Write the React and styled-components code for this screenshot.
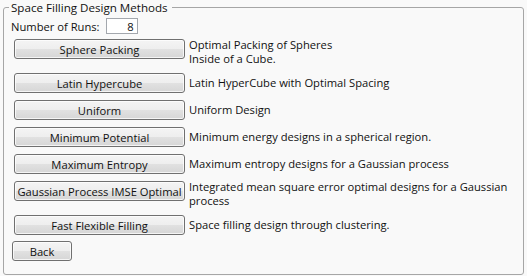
import React from "react"
import styled, { createGlobalStyle } from "styled-components"

const GlobalStyle = createGlobalStyle`
    html, body {
        margin: 0;
        padding: 0;
        background: #f9f9f9;
    }
    body {
        font-family: "Open Sans", "Noto Sans", sans-serif;
        font-size: 11.2px;
        color: #111;
    }
`

const Panel = styled.fieldset`
    margin: 0 3px;
    padding: 3px 5px 13px 5px;
    border: 1px solid #a6a6a6;
    border-radius: 3px;
    min-width: 0;
`

const Legend = styled.legend`
    padding: 0 4px 0 2px;
    line-height: 15px;
    font-size: 11.6px;
`

const RunsRow = styled.div`
    display: flex;
    align-items: center;
    gap: 6px;
    margin-left: 2px;
    height: 16px;
`

const RunsInput = styled.input`
    box-sizing: border-box;
    width: 32px;
    height: 16px;
    border: 1px solid #a3a7ad;
    background: #fff;
    text-align: right;
    font: inherit;
    padding: 0 3px;
    color: #111;
    outline: none;
`

const MethodGrid = styled.div`
    display: grid;
    grid-template-columns: 171px 1fr;
    column-gap: 4px;
    row-gap: 7px;
    margin: 5px 0 0 5px;
`

const Button = styled.button`
    box-sizing: border-box;
    width: ${p => p.$width || "171px"};
    height: 20px;
    padding: 0 2px;
    border: 1px solid #707070;
    border-radius: 3px;
    background: linear-gradient(#f4f4f4 0%, #eeeeee 50%, #e1e1e1 51%, #d6d6d6 100%);
    box-shadow: inset 0 0 0 1px rgba(255, 255, 255, 0.75);
    font: inherit;
    color: #111;
    white-space: nowrap;
    align-self: start;
    cursor: default;
`

const Desc = styled.div`
    align-self: center;
    line-height: 14px;
    margin-top: -1px;
`

const BackRow = styled.div`
    margin: 6px 0 0 3px;
`

const methods = [
    { name: "Sphere Packing", desc: <>Optimal Packing of Spheres<br />Inside of a Cube.</> },
    { name: "Latin Hypercube", desc: "Latin HyperCube with Optimal Spacing" },
    { name: "Uniform", desc: "Uniform Design" },
    { name: "Minimum Potential", desc: "Minimum energy designs in a spherical region." },
    { name: "Maximum Entropy", desc: "Maximum entropy designs for a Gaussian process" },
    { name: "Gaussian Process IMSE Optimal", desc: "Integrated mean square error optimal designs for a Gaussian process" },
    { name: "Fast Flexible Filling", desc: "Space filling design through clustering." },
]

export default function App() {
    return (
        <>
            <GlobalStyle />
            <Panel>
                <Legend>Space Filling Design Methods</Legend>
                <RunsRow>
                    <span>Number of Runs:</span>
                    <RunsInput defaultValue="8" />
                </RunsRow>
                <MethodGrid>
                    {methods.map(m => (
                        <React.Fragment key={m.name}>
                            <Button>{m.name}</Button>
                            <Desc>{m.desc}</Desc>
                        </React.Fragment>
                    ))}
                </MethodGrid>
                <BackRow>
                    <Button $width="60px">Back</Button>
                </BackRow>
            </Panel>
        </>
    )
}
